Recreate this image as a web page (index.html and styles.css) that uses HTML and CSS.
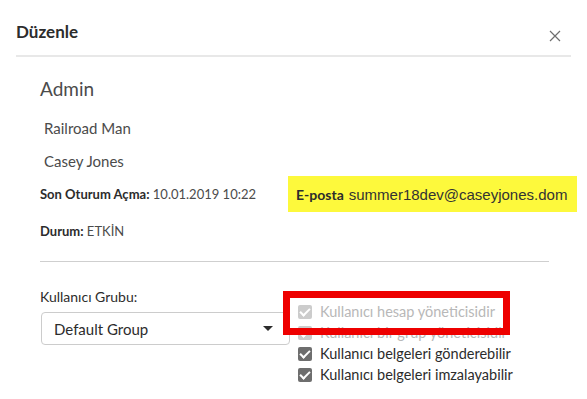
FILE: index.html
```html
<!DOCTYPE html>
<html lang="tr">
<head>
    <meta charset="UTF-8">
    <meta name="viewport" content="width=device-width, initial-scale=1.0">
    <title>Düzenle</title>
    <link rel="stylesheet" href="styles.css">
</head>
<body>
    <div class="dialog">
        <div class="dialog-header">
            <h1 class="dialog-title">Düzenle</h1>
            <button class="close-button" aria-label="Kapat">
                <svg width="12" height="12" viewBox="0 0 12 12">
                    <path d="M1 1 L11 11 M11 1 L1 11" stroke="#6e6e6e" stroke-width="1.2" fill="none"/>
                </svg>
            </button>
        </div>

        <div class="dialog-body">
            <h2 class="user-role">Admin</h2>
            <p class="user-name">Railroad Man</p>
            <p class="user-name">Casey Jones</p>

            <div class="info-row">
                <p class="info"><strong>Son Oturum Açma:</strong> 10.01.2019 10:22</p>
                <div class="email-box">
                    <strong>E-posta</strong>
                    <span class="email">summer18dev@caseyjones.dom</span>
                </div>
            </div>

            <p class="info status"><strong>Durum:</strong> ETKİN</p>

            <hr class="divider">

            <div class="settings">
                <div class="group-field">
                    <label class="field-label">Kullanıcı Grubu:</label>
                    <div class="select">
                        <span>Default Group</span>
                        <span class="select-arrow"></span>
                    </div>
                </div>

                <ul class="permissions">
                    <li class="disabled"><span class="checkbox"></span>Kullanıcı hesap yöneticisidir</li>
                    <li class="disabled"><span class="checkbox"></span>Kullanıcı bir grup yöneticisidir</li>
                    <li><span class="checkbox"></span>Kullanıcı belgeleri gönderebilir</li>
                    <li><span class="checkbox"></span>Kullanıcı belgeleri imzalayabilir</li>
                </ul>
            </div>
        </div>

        <!-- annotation frame drawn over the first permission -->
        <div class="highlight-frame"></div>
    </div>
</body>
</html>
```

FILE: styles.css
```css
/* General Styles */
body {
    margin: 0;
    background-color: #ffffff;
    font-family: Lato, "Noto Sans", sans-serif;
    color: #2c2c2c;
}

.dialog {
    position: relative;
    width: 587px;
    height: 399px;
    overflow: hidden;
}

/* Header */
.dialog-header {
    display: flex;
    align-items: center;
    justify-content: space-between;
    margin: 0 16px;
    padding: 21px 0 12px;
    border-bottom: 2px solid #e8e8e8;
}
.dialog-title {
    margin: 0;
    font-size: 17px;
    line-height: 22px;
    font-weight: 700;
    color: #2c2c2c;
}
.close-button {
    display: flex;
    padding: 0;
    margin: 8px 10px 0 0;
    border: none;
    background: none;
    cursor: pointer;
}

/* Body */
.dialog-body {
    padding: 20px 38px 0 40px;
}
.user-role {
    margin: 0;
    font-size: 19px;
    line-height: 24px;
    font-weight: 400;
    color: #4b4b4b;
}
.user-name {
    margin: 17px 0 0 4px;
    font-size: 15px;
    line-height: 20px;
    color: #4b4b4b;
}
.user-name + .user-name {
    margin-top: 13px;
}

.info-row {
    display: flex;
    align-items: center;
    justify-content: space-between;
    margin-top: 5px;
    margin-right: -28px;
}
.info {
    margin: 0;
    font-size: 13px;
    line-height: 20px;
    color: #4b4b4b;
}
.info strong {
    color: #2c2c2c;
}
.status {
    margin-top: 9px;
}

.email-box {
    display: flex;
    align-items: center;
    gap: 5px;
    width: 281px;
    height: 36px;
    padding-left: 8px;
    background-color: #fdf93c;
    font-size: 14px;
}
.email {
    font-family: "Liberation Sans", Arial, sans-serif;
    font-size: 15px;
    color: #333333;
}

.divider {
    margin: 20px 0 0;
    border: none;
    border-top: 1px solid #cfcfcf;
}

/* Settings */
.settings {
    display: flex;
    gap: 8px;
    margin-top: 25px;
}
.group-field {
    width: 250px;
}
.field-label {
    display: block;
    font-size: 14px;
    line-height: 20px;
    color: #2c2c2c;
}
.select {
    display: flex;
    align-items: center;
    justify-content: space-between;
    box-sizing: border-box;
    height: 33px;
    margin-top: 5px;
    margin-left: 1px;
    padding: 0 16px 0 12px;
    border: 1px solid #cccccc;
    border-radius: 4px;
    font-size: 15px;
    color: #2c2c2c;
}
.select-arrow {
    width: 0;
    height: 0;
    border-left: 5px solid transparent;
    border-right: 5px solid transparent;
    border-top: 5px solid #2c2c2c;
}

.permissions {
    list-style: none;
    margin: 14px 0 0;
    padding: 0;
}
.permissions li {
    display: flex;
    align-items: center;
    gap: 8px;
    height: 21px;
    font-size: 14.5px;
    color: #2c2c2c;
}
.permissions li.disabled {
    color: #b8b8b8;
}
.checkbox {
    position: relative;
    width: 14px;
    height: 14px;
    border-radius: 2px;
    background-color: #6e6e6e;
}
.checkbox::after {
    content: "";
    position: absolute;
    left: 4px;
    top: 1px;
    width: 4px;
    height: 8px;
    border-right: 2px solid #ffffff;
    border-bottom: 2px solid #ffffff;
    transform: rotate(45deg);
}
.disabled .checkbox {
    background-color: #cccccc;
}

/* Annotation */
.highlight-frame {
    position: absolute;
    left: 283px;
    top: 291px;
    width: 213px;
    height: 30px;
    border: 7px solid #ee0000;
}
```
